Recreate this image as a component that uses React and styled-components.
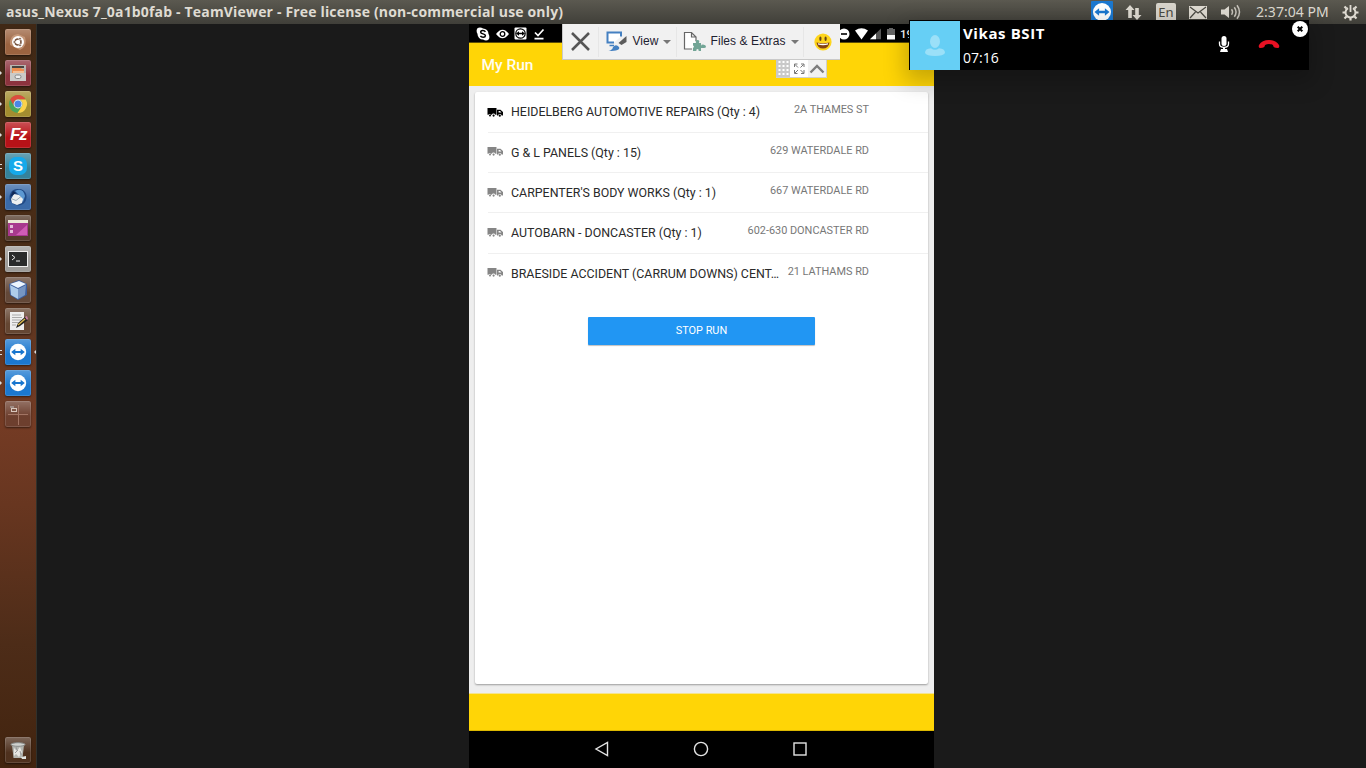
import React from 'react';
import styled, { createGlobalStyle } from 'styled-components';

const GlobalStyle = createGlobalStyle`
  * { box-sizing: border-box; }
  body { margin: 0; background: #1a1a1a; overflow: hidden; }
  svg { display: block; flex: none; }
`;

const Desktop = styled.div`
  width: 1366px;
  height: 768px;
  display: flex;
  flex-direction: column;
  position: relative;
  background: #1a1a1a;
  overflow: hidden;
  font-family: Roboto, sans-serif;
`;

/* ---------- top panel ---------- */
const Panel = styled.header`
  height: 24px;
  flex: none;
  display: flex;
  align-items: center;
  justify-content: space-between;
  padding: 0 7px 0 6px;
  background: linear-gradient(#5b5950, #403f39);
  color: #dfdbd2;
`;
const WindowTitle = styled.div`
  font: 700 14px/24px 'Open Sans', sans-serif;
  letter-spacing: 0.17px;
  white-space: pre;
`;
const Tray = styled.div`
  display: flex;
  align-items: center;
  height: 24px;
`;
const TraySlot = styled.div`
  margin-right: ${(p) => p.$gap}px;
`;
const LangBadge = styled.div`
  width: 20px;
  height: 19px;
  margin-top: 1px;
  border-radius: 2px;
  background: #d8d4cb;
  color: #4a4942;
  font: 400 13px/18px 'Noto Sans', sans-serif;
  text-align: center;
`;
const Clock = styled.div`
  width: 74px;
  margin-right: 12px;
  font: 400 14px/24px 'Noto Sans', sans-serif;
  letter-spacing: 0.05px;
  white-space: nowrap;
`;

/* ---------- launcher ---------- */
const Workspace = styled.div`
  flex: 1;
  display: flex;
  min-height: 0;
`;
const Launcher = styled.nav`
  width: 37px;
  flex: none;
  display: flex;
  flex-direction: column;
  gap: 5px;
  padding: 5px 0 5px 5px;
  border-right: 1px solid #30302b;
  background: linear-gradient(#402815 0, #4b2d17 230px, #613620 310px, #743b24 400px, #683620 480px, #4d2c18 620px, #42240f 744px);
`;
const Tile = styled.div`
  position: relative;
  width: 26px;
  height: 26px;
  flex: none;
  margin-top: ${(p) => (p.$last ? 'auto' : 0)};
  display: flex;
  align-items: center;
  justify-content: center;
  border-radius: 2px;
  background: linear-gradient(rgba(255, 255, 255, 0.28), rgba(255, 255, 255, 0.02) 60%), ${(p) => p.$color};
  box-shadow: inset 0 0 0 1px rgba(255, 255, 255, 0.13), 0 1px 2px rgba(0, 0, 0, 0.5);
`;
const RunningMark = styled.i`
  position: absolute;
  left: -5px;
  top: 11px;
  width: ${(p) => (p.$many ? 2 : 0)}px;
  height: ${(p) => (p.$many ? 5 : 0)}px;
  border-style: solid;
  border-color: ${(p) => (p.$many ? '#ddd transparent' : 'transparent transparent transparent #ddd')};
  border-width: ${(p) => (p.$many ? '1px 0' : '2px 0 2px 2px')};
`;
const FocusMark = styled.i`
  position: absolute;
  right: -5px;
  top: 11px;
  border: solid transparent;
  border-width: 2px 2px 2px 0;
  border-right-color: #ddd;
`;
const FzLabel = styled.span`
  color: #fff;
  font: italic 700 17px/22px 'Liberation Sans', sans-serif;
  letter-spacing: -1.5px;
`;
const SkypeBall = styled.span`
  width: 18px;
  height: 18px;
  border-radius: 7px;
  background: #16a9ea;
  color: #fff;
  text-align: center;
  font: 700 15px/18px 'Liberation Sans', sans-serif;
`;

/* ---------- device ---------- */
const Stage = styled.main`
  flex: 1;
  padding-left: 432px;
  display: flex;
`;
const Device = styled.section`
  width: 465px;
  display: flex;
  flex-direction: column;
  background: #eee;
`;
const StatusBar = styled.div`
  height: 19px;
  flex: none;
  display: flex;
  align-items: center;
  justify-content: space-between;
  padding: 0 0 0 7px;
  background: linear-gradient(#000 18px, #5e4f05 18px);
  color: #fff;
`;
const StatusGroup = styled.div`
  display: flex;
  align-items: center;
  gap: ${(p) => p.$gap}px;
  font: 500 11.5px/18px Roboto, sans-serif;
`;
const StatusClock = styled.span`
  width: 34px;
  margin-left: -2px;
  font-size: 11.5px;
`;
const AppHeader = styled.div`
  height: 43px;
  flex: none;
  padding-left: 12.5px;
  background: #ffd506;
  color: #fffdf0;
  font: 500 15.5px/44px Roboto, sans-serif;
`;
const Content = styled.div`
  flex: 1;
  padding: 6px 6px 9px;
  display: flex;
`;
const Card = styled.div`
  flex: 1;
  min-width: 0;
  padding-top: 0.3px;
  background: #fff;
  border-radius: 2px;
  box-shadow: 0 1px 2px rgba(0, 0, 0, 0.35);
`;
const Row = styled.div`
  height: 40.33px;
  margin-left: 12.5px;
  padding-right: 59px;
  display: flex;
  align-items: flex-start;
  border-bottom: ${(p) => (p.$last ? 0 : 1)}px solid #f0f0f0;
`;
const TruckSlot = styled.div`
  padding-top: ${(p) => (p.$active ? 14.7 : 13.7)}px;
  width: 23.5px;
  flex: none;
  margin-left: -0.5px;
  margin-right: 0.5px;
  color: ${(p) => (p.$active ? '#000' : '#858585')};
`;
const Customer = styled.div`
  flex: 1;
  min-width: 0;
  white-space: nowrap;
  color: #2a2a2a;
  font-size: 12.4px;
  line-height: 40px;
`;
const Address = styled.div`
  margin-left: 7px;
  color: #777;
  font-size: 10.9px;
  line-height: 36px;
  white-space: nowrap;
`;
const StopButton = styled.button`
  display: block;
  width: 227px;
  height: 28px;
  margin: 23px 0 0 113px;
  padding: 0;
  border: 0;
  border-radius: 1px;
  background: #2196f3;
  box-shadow: 0 1px 1px rgba(0, 0, 0, 0.25);
  color: #fff;
  font: 400 10.9px/27px Roboto, sans-serif;
`;
const AppFooter = styled.div`
  height: 38px;
  flex: none;
  border-top: 1px solid #f5e48f;
  border-bottom: 1px solid #dcb700;
  background: #ffd506;
`;
const NavBar = styled.div`
  height: 37px;
  flex: none;
  display: flex;
  align-items: center;
  justify-content: center;
  gap: 83px;
  padding: 0 0.5px 0.5px 0;
  background: #000;
`;

/* ---------- session toolbar ---------- */
const SessionBar = styled.div`
  position: absolute;
  left: 562px;
  top: 24px;
  width: 278px;
  display: flex;
  flex-direction: column;
  align-items: flex-end;
`;
const Tools = styled.div`
  width: 278px;
  height: 36px;
  display: flex;
  align-items: center;
  background: #f1f1f1;
  border: solid #c9c9c9;
  border-width: 0 0 1px 1px;
  color: #1e2230;
  font: 400 12px/34px 'Liberation Sans', sans-serif;
`;
const Tool = styled.div`
  width: ${(p) => p.$w}px;
  height: 30px;
  padding-left: ${(p) => p.$pad}px;
  display: flex;
  align-items: center;
  border-right: ${(p) => (p.$end ? 0 : 1)}px solid #e6e6e6;
`;
const ToolLabel = styled.span`
  width: ${(p) => p.$w}px;
  margin-left: ${(p) => p.$gap}px;
  padding-bottom: 2px;
  letter-spacing: ${(p) => p.$track || 0}px;
  white-space: nowrap;
`;
const Caret = styled.i`
  border: solid transparent;
  border-width: 4px 4px 0;
  border-top-color: #777;
`;
const Handle = styled.div`
  width: 51px;
  height: 18px;
  margin-right: 13px;
  display: flex;
  border: solid #d0d0d0;
  border-width: 0 1px 1px 0;
  background: #f1f1f1;
`;

/* ---------- call window ---------- */
const CallWindow = styled.div`
  position: absolute;
  left: 909px;
  top: 20px;
  width: 400px;
  height: 50px;
  padding: 1px 0 0 1px;
  display: flex;
  background: #000;
  color: #fff;
  box-shadow: 0 8px 22px 4px rgba(0, 0, 0, 0.22);
`;
const Avatar = styled.div`
  width: 50px;
  height: 49px;
  background: #66cff5;
`;
const Caller = styled.div`
  width: 258px;
  padding-left: 3px;
  font: 400 14px/25px 'Open Sans', sans-serif;
`;
const CallerName = styled.div`
  font-weight: 700;
  font-size: 15px;
  line-height: 24px;
  letter-spacing: 0.6px;
`;
const CallActions = styled.div`
  display: flex;
  align-items: center;
  gap: 28px;
  height: 45px;
`;
const CloseBadge = styled.div`
  position: absolute;
  right: 1px;
  top: 1px;
  width: 16px;
  height: 16px;
  border-radius: 50%;
  background: #fff;
  display: flex;
  align-items: center;
  justify-content: center;
`;

const Arrows = ({ size = 22, bg = '#1b78d0', square = true }) => (
  <svg width={size} height={size} viewBox="0 0 22 22">
    {square && <rect width="22" height="22" rx="1" fill={bg} />}
    <circle cx="11" cy="11" r="9" fill="#fff" />
    <path d="M3.5 11l4.6-3.7v2.5h5.8V7.3l4.6 3.7-4.6 3.7v-2.5H8.1v2.5z" fill={bg} />
  </svg>
);

const Truck = () => (
  <svg width="16" height="11" viewBox="0 0 16 11" fill="currentColor">
    <path d="M.5 1h9v6.7H8.4a2 2 0 0 0-3.7 0H3.8a1.6 1.6 0 0 0-2.4 0H.5z" />
    <path fillRule="evenodd" d="M10 2.7h3.5L16 5v3.5h-1.400a1.8 1.8 0 0 0-3.5 0H10zm1.600 1.200v1.600h2.900l-1.500-1.600z" />
    <circle cx="3" cy="8.4" r="1" />
    <circle cx="6.6" cy="8.6" r="1.1" />
    <circle cx="12.8" cy="8.7" r="1.1" />
  </svg>
);

const Ubuntu = () => (
  <svg width="22" height="22" viewBox="0 0 22 22">
    <path d="M3 14Q2 4 11 3l7 3q3 9-5 13z" fill="#ddb394" opacity=".55" />
    <circle cx="11" cy="11" r="6" fill="#fff" />
    <circle cx="11" cy="11" r="3" fill="none" stroke="#75513b" strokeWidth="1.5" />
    <g fill="#75513b" stroke="#fff" strokeWidth=".7">
      <circle cx="7.3" cy="11" r="1.3" />
      <circle cx="13" cy="7.7" r="1.3" />
      <circle cx="13" cy="14.3" r="1.3" />
    </g>
  </svg>
);
const Files = () => (
  <svg width="20" height="22" viewBox="0 0 20 22">
    <path d="M2 3h16v15H2z" fill="#b9b6b1" />
    <path d="M4 4h12v2H4z" fill="#484440" />
    <path d="M4 6h9l1 1h2v5H4z" fill="#ed8d50" />
    <path d="M5 9h11v3H5z" fill="#f5c095" />
    <path d="M2 11h16v8H2z" fill="#cbcac8" />
    <rect x="7" y="13" width="6" height="3.5" rx="1.7" fill="#eee" stroke="#888" />
  </svg>
);
const ChromeLogo = () => (
  <svg width="20" height="20" viewBox="0 0 20 20">
    <circle cx="10" cy="10" r="9" fill="#4ba65b" />
    <path d="M2.2 5.5a9 9 0 0 1 15.6 0H10a4.5 4.5 0 0 0-3.9 6.8z" fill="#dc4d3e" />
    <path d="M17.8 5.5A9 9 0 0 1 9.5 19l4.4-6.8A4.5 4.5 0 0 0 10 5.5z" fill="#fbd14b" />
    <circle cx="10" cy="10" r="4.4" fill="#eee" />
    <circle cx="10" cy="10" r="3.5" fill="#4a87e8" />
  </svg>
);
const Bird = () => (
  <svg width="22" height="22" viewBox="0 0 22 22">
    <path d="M3 15C1 8 5 2 12 3c6 0 9 6 7 11-2 6-10 8-16 1z" fill="#214a86" />
    <path d="M8 5q8-4 10 5l-2 6-4-7z" fill="#5c98d2" />
    <path d="M4 13l3-5 5 1 4 4-1 4-5 2-5-2z" fill="#edf0f1" />
    <path d="M4 12.5l5 2 5-4" stroke="#9dafbb" fill="none" />
    <path d="M3 11l3-6 3 2z" fill="#102957" />
  </svg>
);
const PurpleWindow = () => (
  <svg width="22" height="22" viewBox="0 0 22 22">
    <rect x="1" y="3" width="20" height="16" fill="#a8398e" />
    <path d="M9 18L20 8v10z" fill="#d05cb5" />
    <path d="M1 3h20v3H1z" fill="#ece9d7" />
    <path d="M3 8h3v3H3zm0 5h3v3H3z" fill="#e4bad9" />
  </svg>
);
const TerminalIcon = () => (
  <svg width="22" height="22" viewBox="0 0 22 22">
    <rect x="1.5" y="3.5" width="19" height="15" fill="#292b2b" stroke="#eee" />
    <path d="M5 7l3 2.5L5 12m4 1h4" stroke="#eee" fill="none" />
  </svg>
);
const Cube = () => (
  <svg width="22" height="22" viewBox="0 0 22 22">
    <path d="M2 5l10-4 8 4v11l-9 5-8-5z" fill="#3b5d9c" />
    <path d="M3 5l9-3 7 3-8 4z" fill="#edf6ff" />
    <path d="M3 6l8 4v10l-7-4z" fill="#aecceb" />
    <path d="M19 6l-8 4v10l7-4z" fill="#7695c2" />
  </svg>
);
const Editor = () => (
  <svg width="22" height="22" viewBox="0 0 22 22">
    <path d="M3 2h14v18H3z" fill="#eee" />
    <path d="M5 5h9M5 7.5h10M5 10h9M5 12.5h6M5 15h4" stroke="#aaa" />
    <path d="M9 18l2-5 7-6 3 3-8 6z" fill="#242320" />
    <path d="M11 15l7-6" stroke="#d9b64b" strokeWidth="1.5" />
    <path d="M18 7l2-1 1 3-1 1z" fill="#cf80a7" />
  </svg>
);
const Workspaces = () => (
  <svg width="24" height="24" viewBox="0 0 24 24">
    <path d="M12.5 3v20M2 12.5h20" stroke="#b78978" opacity=".7" />
    <rect x="5.5" y="6.5" width="5" height="3" fill="none" stroke="#d8c7bd" />
    <path d="M4 5h4" stroke="#bbb" />
  </svg>
);
const Trash = () => (
  <svg width="20" height="22" viewBox="0 0 20 22">
    <path d="M4 6h12l-1.5 13h-9z" fill="#b3b5b0" />
    <path d="M6 9l3 3 3-4 2 5-3 5-3-3-2 2z" fill="#e6e6e2" />
    <path d="M7 14l3-3m2 1l1 4M8 8l1 3" stroke="#999" />
    <ellipse cx="10" cy="5.5" rx="7" ry="1.8" fill="#d0d2cf" stroke="#888b89" />
    <path d="M13 18l5-1v3h-4z" fill="#e1e3e0" />
  </svg>
);

const launcherItems = [
  { id: 'dash', color: '#99603c', art: <Ubuntu /> },
  { id: 'files', color: '#8a2f3a', art: <Files />, run: 1 },
  { id: 'chrome', color: '#a28b2c', art: <ChromeLogo />, run: 1 },
  { id: 'ftp', color: '#b60d13', art: <FzLabel>Fz</FzLabel>, run: 1 },
  { id: 'skype', color: '#318099', art: <SkypeBall>S</SkypeBall>, run: 2 },
  { id: 'mail', color: '#3667a6', art: <Bird />, run: 1 },
  { id: 'window', color: '#503727', art: <PurpleWindow /> },
  { id: 'terminal', color: '#9b9a97', art: <TerminalIcon />, run: 1 },
  { id: 'box', color: '#604434', art: <Cube /> },
  { id: 'editor', color: '#62432f', art: <Editor /> },
  { id: 'remote', color: '#1775ce', art: <Arrows size={20} bg="#1775ce" square={false} />, run: 2, focus: true },
  { id: 'remote2', color: '#1775ce', art: <Arrows size={20} bg="#1775ce" square={false} />, run: 1 },
  { id: 'spaces', color: '#6a3b2a', art: <Workspaces /> },
  { id: 'trash', color: '#4b2d1a', art: <Trash />, last: true },
];

const stops = [
  ['HEIDELBERG AUTOMOTIVE REPAIRS (Qty : 4)', '2A THAMES ST'],
  ['G & L PANELS (Qty : 15)', '629 WATERDALE RD'],
  ["CARPENTER'S BODY WORKS (Qty : 1)", '667 WATERDALE RD'],
  ['AUTOBARN - DONCASTER (Qty : 1)', '602-630 DONCASTER RD'],
  ['BRAESIDE ACCIDENT (CARRUM DOWNS) CENT…', '21 LATHAMS RD'],
];

const TopPanel = () => (
  <Panel>
    <WindowTitle>asus_Nexus 7_0a1b0fab - TeamViewer - Free license (non-commercial use only)</WindowTitle>
    <Tray>
      <TraySlot $gap={12}><Arrows /></TraySlot>
      <TraySlot $gap={14}>
        <svg width="17" height="18" viewBox="0 0 17 18" fill="#dfdbd2">
          <path d="M5 2l4.5 5H6.8v8H3.2V7H.5z" />
          <path d="M12 17l-4.5-5h2.7V5h3.6v7h2.7z" />
        </svg>
      </TraySlot>
      <TraySlot $gap={13}><LangBadge>En</LangBadge></TraySlot>
      <TraySlot $gap={14}>
        <svg width="18" height="13" viewBox="0 0 18 13">
          <path d="M0 0h18v13H0z" fill="#dfdbd2" />
          <path d="M1 1l8 6 8-6M1 12l5.5-6M17 12l-5.5-6" fill="none" stroke="#4a4942" strokeWidth="1.2" />
        </svg>
      </TraySlot>
      <TraySlot $gap={15}>
        <svg width="20" height="16" viewBox="0 0 20 16">
          <path d="M0 5.5h3.5L8 2v12l-4.5-3.5H0z" fill="#dfdbd2" />
          <path d="M10.5 5.2q2 2.8 0 5.6M13.3 3.2q3.5 4.8 0 9.6M16 1.3q5 6.7 0 13.4" fill="none" stroke="#c9c5bd" strokeWidth="1.5" />
        </svg>
      </TraySlot>
      <Clock>2:37:04 PM</Clock>
      <svg width="17" height="17" viewBox="0 0 17 17" fill="none" stroke="#dfdbd2">
        <path d="M6 4.2a5 5 0 1 0 5 0" strokeWidth="2" />
        <path d="M8.5 1v7" strokeWidth="1.8" />
        <path d="M2.5 2.5l2 2M14.5 2.5l-2 2M.5 8.5h2.6M16.5 8.5h-2.6M2.5 14.5l2-2M14.5 14.5l-2-2M8.5 16.5V14" strokeWidth="2.2" />
      </svg>
    </Tray>
  </Panel>
);

const Dock = () => (
  <Launcher>
    {launcherItems.map((it) => (
      <Tile key={it.id} $color={it.color} $last={it.last}>
        {it.run && <RunningMark $many={it.run > 1} />}
        {it.art}
        {it.focus && <FocusMark />}
      </Tile>
    ))}
  </Launcher>
);

const DeviceStatus = () => (
  <StatusBar>
    <StatusGroup $gap={5.5}>
      <svg width="14" height="14" viewBox="0 0 14 14">
        <circle cx="7" cy="7" r="5.5" fill="#fff" />
        <circle cx="4" cy="4" r="3.4" fill="#fff" />
        <circle cx="10" cy="10" r="3.4" fill="#fff" />
        <path d="M9.4 4.8C8.3 3 4.6 3.2 4.7 5.2c0 2.1 4.8 1.3 4.7 3.5-.1 2-3.9 2-5 .2" fill="none" stroke="#000" strokeWidth="1.5" />
      </svg>
      <svg width="13" height="12" viewBox="0 0 13 12">
        <path d="M0 6q6.5-8.5 13 0-6.5 8.5-13 0z" fill="#fff" />
        <circle cx="6.5" cy="6" r="2.3" fill="#fff" stroke="#000" strokeWidth="1.3" />
      </svg>
      <svg width="13" height="13" viewBox="0 0 13 13">
        <rect x=".5" y=".5" width="12" height="12" rx="1" fill="#fff" />
        <circle cx="6.5" cy="6.5" r="4.7" fill="#fff" stroke="#000" strokeWidth="1.2" />
        <path d="M2 6.5l3-2.3v1.6h3V4.2l3 2.3-3 2.3V7.2H5v1.6z" fill="#000" />
      </svg>
      <svg width="12" height="12" viewBox="0 0 12 12" fill="none" stroke="#fff" strokeWidth="1.7">
        <path d="M2 4.5l3 3L10.5 1.5M1.5 10.7h9" />
      </svg>
    </StatusGroup>
    <StatusGroup $gap={5}>
      <svg width="12" height="12" viewBox="0 0 12 12">
        <circle cx="6" cy="6" r="5.5" fill="#fff" />
        <path d="M3 6h6" stroke="#000" strokeWidth="1.6" />
      </svg>
      <svg width="27" height="12" viewBox="0 0 27 12">
        <path d="M0 2.5q6.5-4.5 13 0L6.5 11.5z" fill="#fff" />
        <path d="M26 .5v10.8H15z" fill="#555" />
        <path d="M21 5.5v5.8h-6z" fill="#fff" />
      </svg>
      <svg width="10" height="12" viewBox="3 0 10 12">
        <path d="M5 0h4v1h2v6H3V1h2z" fill="#666" />
        <path d="M3 7h8v4.5H3z" fill="#fff" />
      </svg>
      <StatusClock>19:07</StatusClock>
    </StatusGroup>
  </StatusBar>
);

const Toolbar = () => (
  <SessionBar>
    <Tools>
      <Tool $w={36} $pad={8}>
        <svg width="19" height="19" viewBox="0 0 19 19" stroke="#555" strokeWidth="2.5">
          <path d="M1 1l17 17M18 1L1 18" />
        </svg>
      </Tool>
      <Tool $w={78} $pad={7}>
        <svg width="21" height="21" viewBox="0 0 21 21">
          <path d="M15 5.5V1.5H1.5v10H8" fill="#fff" stroke="#4480c1" strokeWidth="2" />
          <path d="M3.5 14.5H8" stroke="#4480c1" strokeWidth="1.5" />
          <path d="M2.5 20q4-1 4.5-4 3-3.5 6 0 2 4-10.5 4z" fill="#4480c1" />
          <path d="M20.5 5v6l-5 3-3-2z" fill="#5c5c5c" />
        </svg>
        <ToolLabel $w={30.5} $gap={5.5}>View</ToolLabel>
        <Caret />
      </Tool>
      <Tool $w={127} $pad={6}>
        <svg width="24" height="21" viewBox="0 0 24 21">
          <path d="M9 18H1.5V1.5h7L13 6v4M8.5 1.5V6H13" fill="#fff" stroke="#666" strokeWidth="1.2" />
          <path d="M10 12h3.2q-1.5-3 1.3-3t1.3 3H18v3q0-1.4 2-1.400 3 .3 3 2t-2.5 1.5H18V20h-2.3q.2-2-1.2-2t-1.200 2H10v-3q2-1.500 0-2.500z" fill="#72a596" />
        </svg>
        <ToolLabel $w={80} $gap={3.5} $track={0.07}>Files &amp; Extras</ToolLabel>
        <Caret />
      </Tool>
      <Tool $w={34} $pad={9.5} $end>
        <svg width="18" height="18" viewBox="0 0 18 18">
          <circle cx="9" cy="9" r="8.6" fill="#fed51c" />
          <ellipse cx="6.4" cy="5.7" rx="1.1" ry="2.3" fill="#654518" />
          <ellipse cx="11.6" cy="5.7" rx="1.1" ry="2.3" fill="#654518" />
          <path d="M2.5 9.5q6.5 1.5 13 0-1 6-6.5 6t-6.5-6z" fill="#844313" />
          <path d="M4 10.3q5 1 10 0v1.3q-5 1.2-10 0z" fill="#fff" />
        </svg>
      </Tool>
    </Tools>
    <Handle>
      <svg width="14" height="17" viewBox="0 0 14 17">
        <path d="M0 0h14v17H0z" fill="#c9c9c9" />
        <path d="M3.5 1v15M7.5 1v15M11.5 1v15" stroke="#fff" strokeWidth="2" strokeDasharray="2 2" />
      </svg>
      <svg width="18" height="17" viewBox="0 0 18 17">
        <path d="M0 0h18v17H0z" fill="#fff" />
        <path d="M4.5 7V4h3M11 4h3v3M14 10v3.5h-3M7.5 13.5h-3V10M5 4.5l3 3M13.5 4.5l-3 3M13.5 13l-3-3M5 13l3-3" fill="none" stroke="#777" />
      </svg>
      <svg width="18" height="17" viewBox="0 0 18 17">
        <path d="M2.5 12.5L9 6l6.5 6.5" fill="none" stroke="#7d7d7d" strokeWidth="2.4" />
      </svg>
    </Handle>
  </SessionBar>
);

const Call = () => (
  <CallWindow>
    <Avatar>
      <svg width="50" height="49" viewBox="0 0 50 49" fill="#9be0f8">
        <ellipse cx="25" cy="20.5" rx="5" ry="6.5" />
        <path d="M15 32q0-4.5 6-4.8 4 3 8 0 6 .3 6 4.8-1.5 3-10 3t-10-3z" />
      </svg>
    </Avatar>
    <Caller>
      <CallerName>Vikas BSIT</CallerName>
      <div>07:16</div>
    </Caller>
    <CallActions>
      <svg width="12" height="18" viewBox="0 0 12 18">
        <rect x="3.5" y="1" width="5" height="10" rx="2.5" fill="#fff" />
        <path d="M1.5 6.5v2.5q0 3.3 4.5 3.3T10.5 9V6.5" stroke="#fff" strokeWidth="1.3" fill="none" />
        <path d="M5 12h2v2h2l1 3H2l1-3h2z" fill="#fff" />
      </svg>
      <svg width="22" height="10" viewBox="0 0 22 10">
        <path d="M1 6Q4 1 11 1t10 5q1 3-1.5 3Q15 9 15 6q-4-2-8 0 0 3-4.5 3Q0 9 1 6z" fill="#e81123" />
      </svg>
    </CallActions>
    <CloseBadge>
      <svg width="6" height="6" viewBox="0 0 6 6" stroke="#000" strokeWidth="2"><path d="M.7.7l4.6 4.6M5.3.7L.7 5.3" /></svg>
    </CloseBadge>
  </CallWindow>
);

export default function App() {
  return (
    <Desktop>
      <GlobalStyle />
      <TopPanel />
      <Workspace>
        <Dock />
        <Stage>
          <Device>
            <DeviceStatus />
            <AppHeader>My Run</AppHeader>
            <Content>
              <Card>
                {stops.map(([name, address], i) => (
                  <Row key={name} $last={i === stops.length - 1}>
                    <TruckSlot $active={i === 0}><Truck /></TruckSlot>
                    <Customer>{name}</Customer>
                    <Address>{address}</Address>
                  </Row>
                ))}
                <StopButton>STOP RUN</StopButton>
              </Card>
            </Content>
            <AppFooter />
            <NavBar>
              <svg width="16" height="16" viewBox="0 0 16 16" fill="none" stroke="#e4e4e4" strokeWidth="1.4"><path d="M13.5 1.5v13L2 8z" /></svg>
              <svg width="16" height="16" viewBox="0 0 16 16" fill="none" stroke="#e4e4e4" strokeWidth="1.4"><circle cx="8" cy="8" r="6.6" /></svg>
              <svg width="16" height="16" viewBox="0 0 16 16" fill="none" stroke="#e4e4e4" strokeWidth="1.4"><rect x="2" y="2" width="12" height="12" /></svg>
            </NavBar>
          </Device>
        </Stage>
      </Workspace>
      <Toolbar />
      <Call />
    </Desktop>
  );
}
